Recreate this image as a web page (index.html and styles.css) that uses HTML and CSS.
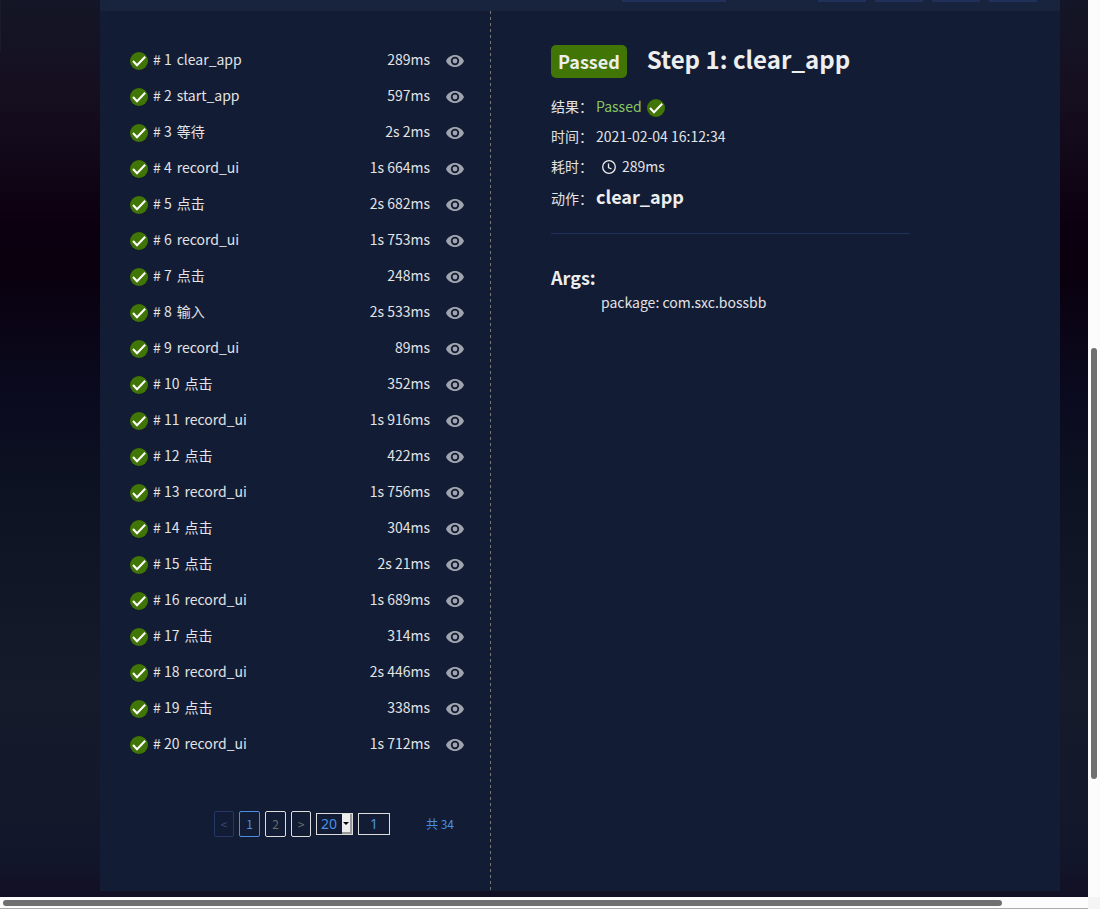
FILE: index.html
```
<!DOCTYPE html>
<html lang="zh">
<head>
<meta charset="utf-8">
<title>Step 1: clear_app</title>
<link rel="stylesheet" href="styles.css">
</head>
<body>
<svg class="sprite" aria-hidden="true">
  <symbol id="ok" viewBox="0 0 18 18"><circle cx="9" cy="9" r="9" fill="#417505"/><path d="M3 9 7 13.200 15.200 4.800" fill="none" stroke="#fff" stroke-width="2"/></symbol>
  <symbol id="eye" viewBox="0 0 18 12"><path fill-rule="evenodd" d="M9 0C5 0 1.500 2.400 0 6c1.500 3.600 5 6 9 6s7.500-2.400 9-6c-1.500-3.600-5-6-9-6zm0 10.200a4.200 4.200 0 1 1 0-8.400 4.200 4.200 0 0 1 0 8.400z" fill="#a0a4ae"/><circle cx="9" cy="6" r="2.400" fill="#a0a4ae"/></symbol>
</svg>
<div class="window">
  <div class="page">
    <div class="report">
      <header class="toolbar"><i class="tab wide"></i><i class="tab"></i><i class="tab"></i><i class="tab"></i><i class="tab"></i></header>
      <div class="panes">
        <section class="steps">
          <div class="list" id="list"></div>
          <div class="pager">
            <span class="pg prev">&lt;</span><span class="pg current">1</span><span class="pg">2</span><span class="pg next">&gt;</span>
            <span class="size"><span class="num">20</span><span class="drop"><i></i></span></span>
            <span class="jump">1</span>
            <span class="total">共 34</span>
          </div>
        </section>
        <section class="detail">
          <div class="heading"><span class="badge">Passed</span><h1>Step 1: clear_app</h1></div>
          <div class="field"><span class="label">结果：</span><span class="pass">Passed</span><svg class="ok"><use href="#ok"/></svg></div>
          <div class="field"><span class="label">时间：</span><span>2021-02-04 16:12:34</span></div>
          <div class="field"><span class="label">耗时：</span><svg class="clock" viewBox="0 0 14 14"><circle cx="7" cy="7" r="6.300"/><path d="M6.500 3.500V7.500L9.500 9"/></svg><span>289ms</span></div>
          <div class="field action"><span class="label">动作：</span><strong>clear_app</strong></div>
          <div class="args"><h2>Args:</h2><p>package: com.sxc.bossbb</p></div>
        </section>
      </div>
    </div>
  </div>
  <div class="vbar"><i></i></div>
  <div class="hbar"><i></i></div>
  <div class="corner"></div>
</div>
<script src="steps.js"></script>
</body>
</html>
```
FILE: steps.js
```
const steps = [
  ["clear_app", "289ms"], ["start_app", "597ms"], ["等待", "2s 2ms"], ["record_ui", "1s 664ms"],
  ["点击", "2s 682ms"], ["record_ui", "1s 753ms"], ["点击", "248ms"], ["输入", "2s 533ms"],
  ["record_ui", "89ms"], ["点击", "352ms"], ["record_ui", "1s 916ms"], ["点击", "422ms"],
  ["record_ui", "1s 756ms"], ["点击", "304ms"], ["点击", "2s 21ms"], ["record_ui", "1s 689ms"],
  ["点击", "314ms"], ["record_ui", "2s 446ms"], ["点击", "338ms"], ["record_ui", "1s 712ms"]
];
document.getElementById("list").innerHTML = steps.map(([name, time], i) =>
  `<div class="step"><svg class="ok"><use href="#ok"/></svg><span class="order"># ${i + 1}</span><span class="name">${name}</span><span class="time">${time}</span><svg class="eye"><use href="#eye"/></svg></div>`
).join("");
```
FILE: styles.css
```
* { box-sizing: border-box; }
body { margin: 0; overflow: hidden; font: 14px/20px "Noto Sans CJK SC", sans-serif; color: #e2e3e5; }
h1, h2, p { margin: 0; }
.sprite { display: none; }
.window { display: grid; grid-template: 897px 12px / 1088px 12px; }
.page { padding: 0 28px 6px 100px; background: linear-gradient(#1a1c2c, #1a1c2c) 0 0 / 1px 52px no-repeat, linear-gradient(#131626 0, #160f20 95px, #0c0010 225px, #0a000e 268px, #0a0a1e 390px, #0d1322 500px, #151b2b 690px, #12162a 860px, #120f24 897px); }
.report { display: flex; flex-direction: column; height: 891px; background: #121c34; }
.toolbar { display: flex; flex: none; gap: 9px; height: 11px; padding-left: 522px; background: #18233e; }
.tab { width: 48px; height: 2px; background: #203058; }
.wide { width: 104px; margin-right: 83px; }
.panes { display: flex; flex: 1; }
.steps { width: 391px; padding: 31px 27px 0 30px; background: repeating-linear-gradient(#777472 0 3px, transparent 3px 6px) right / 1px 100% no-repeat; }
.step { display: flex; align-items: center; height: 36px; }
.ok { width: 18px; height: 18px; margin-top: 2px; }
.order { margin-left: 5px; }
.name { margin-left: 5px; }
.order, .name, .time { position: relative; top: -1px; }
.time { margin-left: auto; }
.eye { width: 18px; height: 12px; margin-left: 16px; margin-top: 2px; }
.pager { display: flex; align-items: center; margin: 49px -1px 0 84px; height: 26px; font-size: 12px; color: #4a90e2; }
.pg { width: 21px; height: 26px; margin-right: 5px; border: 1px solid #ddd; border-radius: 2px; line-height: 24px; text-align: center; color: #6c6c6c; }
.prev { width: 20px; border-color: #243865; color: #314a7c; }
.next { width: 20px; }
.current { border-color: #4a90e2; color: #4a90e2; }
.size { display: flex; width: 37px; height: 22px; margin-right: 5px; border: 1px solid #ddd; font: 14px/20px "Noto Sans", sans-serif; }
.num { width: 25px; padding-left: 4px; }
.drop { display: flex; align-items: center; justify-content: center; width: 10px; background: #eee; border-right: 2px solid #999; border-bottom: 2px solid #999; }
.drop i { border: 3px solid transparent; border-top-color: #000; border-bottom: 0; }
.jump { width: 32px; height: 22px; border: 1px solid #ddd; text-align: center; font: 14px/20px "Noto Sans", sans-serif; }
.total { margin-left: 36px; }
.detail { width: 419px; padding: 34px 0 0 60px; }
.heading { display: flex; align-items: flex-start; height: 46px; color: #eee; }
.badge { height: 33px; padding: 0 7px; border-radius: 5px; background: #417505; font-size: 18px; font-weight: 700; line-height: 32px; }
h1 { margin-left: 20px; font-size: 24px; line-height: 28px; }
.field { display: flex; align-items: center; height: 30px; }
.label { width: 45px; }
.pass { color: #8ac760; margin-right: 6px; }
.field .ok { margin-top: 3px; margin-left: -1px; }
.clock { width: 14px; height: 14px; margin: 2px 6px 0; fill: none; stroke: #eee; stroke-width: 1.3; }
.action { align-items: flex-start; height: 52px; padding-top: 6px; line-height: 22px; }
.action strong { font-size: 18px; line-height: 18px; color: #eee; }
.args { width: 359px; padding-top: 32px; border-top: 1px solid #20305a; }
h2 { font-size: 18px; line-height: 22px; color: #eee; }
.args p { padding-left: 50px; line-height: 28px; }
.vbar { padding: 348px 0 0 3px; background: #fcfcfc; }
.vbar i { display: block; width: 6px; height: 431px; border-radius: 3px; background: #707070; }
.hbar { padding: 3px 0 0 3px; background: #fcfcfc; border-bottom: 1px solid #aaa; }
.hbar i { display: block; width: 999px; height: 6px; border-radius: 3px; background: #707070; }
.corner { background: #f5f5f5; }
```
